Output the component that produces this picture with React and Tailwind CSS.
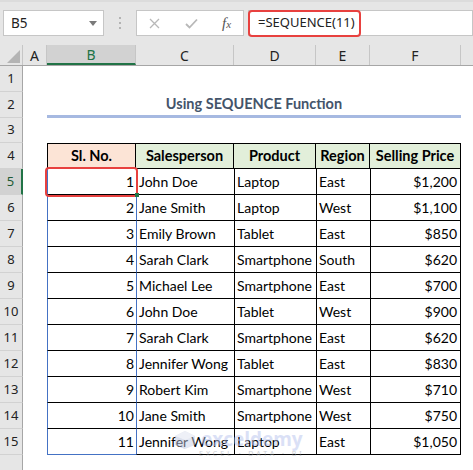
import React from "react";

const data = [
  [1, "John Doe", "Laptop", "East", "$1,200"],
  [2, "Jane Smith", "Laptop", "West", "$1,100"],
  [3, "Emily Brown", "Tablet", "East", "$850"],
  [4, "Sarah Clark", "Smartphone", "South", "$620"],
  [5, "Michael Lee", "Smartphone", "East", "$700"],
  [6, "John Doe", "Tablet", "West", "$900"],
  [7, "Sarah Clark", "Smartphone", "East", "$620"],
  [8, "Jennifer Wong", "Tablet", "East", "$830"],
  [9, "Robert Kim", "Smartphone", "West", "$710"],
  [10, "Jane Smith", "Smartphone", "West", "$750"],
  [11, "Jennifer Wong", "Laptop", "East", "$1,050"],
];

const ui = { fontFamily: '"Noto Sans", "Liberation Sans", sans-serif' };
const cellFont = { fontFamily: 'Lato, "Liberation Sans", sans-serif' };

function RowHeader({ n, selected, h = "h-[26px]" }) {
  return (
    <div
      className={`${h} w-[23px] shrink-0 flex items-center justify-center text-[13px] border-b border-[#d2d2d2] ${
        selected
          ? "bg-[#d2d2d2] border-r-2 border-r-[#217346] text-[#215a35]"
          : "bg-[#e6e6e6] border-r border-r-[#a6a6a6] text-[#222]"
      }`}
      style={ui}
    >
      {n}
    </div>
  );
}

function TopBar() {
  return (
    <div className="h-[45px] bg-[#e6e6e6] flex items-start pt-[10px] border-t-[2px] border-t-[#dcdcdc]" style={ui}>
      <div className="ml-[3px] w-[101px] h-[26px] -mt-[2px] bg-white border border-[#c6c6c6] flex items-center justify-between pl-[7px] pr-[6px]">
        <span className="text-[13.5px] text-[#222]">B5</span>
        <svg width="8" height="5" viewBox="0 0 8 5">
          <path d="M0 0 L8 0 L4 5 Z" fill="#7a7a7a" />
        </svg>
      </div>
      <div className="w-[32px] h-[26px] -mt-[2px] flex flex-col items-center justify-center gap-[3px]">
        <span className="w-[2px] h-[2px] bg-[#b3b3b3]" />
        <span className="w-[2px] h-[2px] bg-[#b3b3b3]" />
        <span className="w-[2px] h-[2px] bg-[#b3b3b3]" />
      </div>
      <div className="w-[108px] h-[26px] -mt-[2px] bg-white border border-[#c6c6c6] flex items-center">
        <svg className="ml-[12px]" width="11" height="11" viewBox="0 0 11 11">
          <path d="M1 1 L10 10 M10 1 L1 10" stroke="#b8b8b8" strokeWidth="1.3" />
        </svg>
        <svg className="ml-[25px]" width="13" height="11" viewBox="0 0 13 11">
          <path d="M1 6 L4.5 9.5 L12 1.5" stroke="#b8b8b8" strokeWidth="1.8" fill="none" />
        </svg>
        <span
          className="ml-[24px] text-[15px] italic text-[#555]"
          style={{ fontFamily: '"Liberation Serif", serif' }}
        >
          f<span className="text-[11px]">x</span>
        </span>
      </div>
      <div className="ml-[4px] flex-1 h-[26px] -mt-[2px] bg-white border border-[#c6c6c6] relative">
        <div className="absolute left-[-1px] top-[-1px] w-[113px] h-[27px] border-[2.5px] border-[#e8413f] rounded-[4px]" />
        <div className="pl-[9px] h-full flex items-center text-[13px] text-[#222]">=SEQUENCE(11)</div>
      </div>
    </div>
  );
}

function ColHeaders() {
  const cols = [
    ["A", "w-[24px]"],
    ["B", "w-[89px]"],
    ["C", "w-[98px]"],
    ["D", "w-[82px]"],
    ["E", "w-[54px]"],
    ["F", "w-[91px]"],
  ];
  return (
    <div className="h-[21px] flex bg-[#e6e6e6] border-b border-[#a6a6a6]" style={ui}>
      <div className="w-[23px] shrink-0 relative border-r border-[#c6c6c6]">
        <svg className="absolute right-[2px] bottom-[2px]" width="13" height="13" viewBox="0 0 13 13">
          <path d="M13 0 L13 13 L0 13 Z" fill="#b4b4b4" />
        </svg>
      </div>
      {cols.map(([c, w]) =>
        c === "B" ? (
          <div
            key={c}
            className={`${w} shrink-0 flex items-center justify-center text-[14px] bg-[#d2d2d2] border-b-2 border-[#217346] text-[#217346] border-r border-r-[#c6c6c6]`}
          >
            {c}
          </div>
        ) : (
          <div key={c} className={`${w} shrink-0 flex items-center justify-center text-[14px] text-[#222] border-r border-[#c6c6c6]`}>
            {c}
          </div>
        )
      )}
      <div className="flex-1" />
    </div>
  );
}

function EmptyRow({ n, h }) {
  return (
    <div className="flex">
      <RowHeader n={n} h={h} />
      <div className="flex-1" />
    </div>
  );
}

export default function App() {
  return (
    <div className="w-[473px] h-[470px] overflow-hidden bg-white relative">
      <TopBar />
      <ColHeaders />
      <EmptyRow n={1} h="h-[26px]" />
      <div className="flex">
        <RowHeader n={2} />
        <div className="w-[24px] shrink-0" />
        <div
          className="w-[414px] shrink-0 h-[26px] flex items-center justify-center border-b-[3px] border-[#a6b9e1] text-[14.5px] font-bold text-[#44546a] pt-[1px]"
          style={cellFont}
        >
          Using SEQUENCE Function
        </div>
      </div>
      <EmptyRow n={3} h="h-[25px]" />
      {/* header row */}
      <div className="flex" style={cellFont}>
        <RowHeader n={4} />
        <div className="w-[24px] shrink-0" />
        <div className="w-[89px] shrink-0 h-[26px] border border-black bg-[#fce4d6] flex items-center justify-center font-bold text-[14.5px] text-black">
          Sl. No.
        </div>
        <div className="w-[98px] shrink-0 h-[26px] border-t border-b border-r border-black bg-[#e2efda] flex items-center justify-center font-bold text-[14.5px] text-black">
          Salesperson
        </div>
        <div className="w-[82px] shrink-0 h-[26px] border-t border-b border-r border-black bg-[#e2efda] flex items-center justify-center font-bold text-[14.5px] text-black">
          Product
        </div>
        <div className="w-[54px] shrink-0 h-[26px] border-t border-b border-r border-black bg-[#e2efda] flex items-center justify-center font-bold text-[14.5px] text-black">
          Region
        </div>
        <div className="w-[91px] shrink-0 h-[26px] border-t border-b border-r border-black bg-[#e2efda] flex items-center justify-center font-bold text-[14.5px] text-black">
          Selling Price
        </div>
      </div>
      {data.map((r, i) => {
        const last = i === data.length - 1;
        return (
          <div key={i} className="flex" style={cellFont}>
            <RowHeader n={5 + i} selected={i === 0} />
            <div className="w-[24px] shrink-0" />
            <div
              className={`w-[89px] shrink-0 h-[26px] border-l border-l-[#4472c4] border-b ${
                last ? "border-b-[#4472c4]" : "border-b-black"
              } flex items-center justify-end pr-[2px] text-[14px] text-black relative`}
            >
              {r[0]}
              {i === 0 && (
                <>
                  <div className="absolute left-[-3px] top-[-2px] right-[-2px] bottom-[-3px] border-[2.5px] border-[#e8413f] rounded-[4px] z-10" />
                  <div className="absolute right-[-3px] bottom-[-3px] w-[4px] h-[4px] bg-[#217346] z-20" />
                </>
              )}
            </div>
            <div className="w-[98px] shrink-0 h-[26px] border-l border-l-[#4472c4] border-b border-b-black flex items-center pl-[2px] text-[14px] text-black whitespace-nowrap">
              {r[1]}
            </div>
            <div className="w-[82px] shrink-0 h-[26px] border-l border-b border-black flex items-center pl-[2px] text-[14px] text-black">
              {r[2]}
            </div>
            <div className="w-[54px] shrink-0 h-[26px] border-l border-b border-black flex items-center pl-[2px] text-[14px] text-black">
              {r[3]}
            </div>
            <div className="w-[91px] shrink-0 h-[26px] border-l border-r border-b border-black flex items-center justify-end pr-[3px] text-[14px] text-black">
              {r[4]}
            </div>
          </div>
        );
      })}
      <EmptyRow n="" h="h-[20px]" />

      {/* watermark */}
      <div className="absolute left-[174px] top-[430px] flex items-start gap-[3px] pointer-events-none opacity-50">
        <svg width="22" height="20" viewBox="0 0 22 20">
          <path d="M11 1 L21 6 L21 15 L11 19 L1 15 L1 6 Z" fill="#c9d0e6" />
          <path d="M11 1 L21 6 L11 10 L1 6 Z" fill="#dfe3f0" />
          <path d="M11 10 L11 19 L1 15 L1 6 Z" fill="#b9c2dc" />
        </svg>
        <div className="flex flex-col items-center leading-none">
          <span className="text-[19px] font-bold text-[#b7c3ee]" style={{ fontFamily: '"Open Sans", sans-serif' }}>
            exceldemy
          </span>
          <span className="text-[7px] tracking-[3px] text-[#9aa0aa] mt-[1px]" style={ui}>
            EXCEL · DATA · BI
          </span>
        </div>
      </div>
    </div>
  );
}
